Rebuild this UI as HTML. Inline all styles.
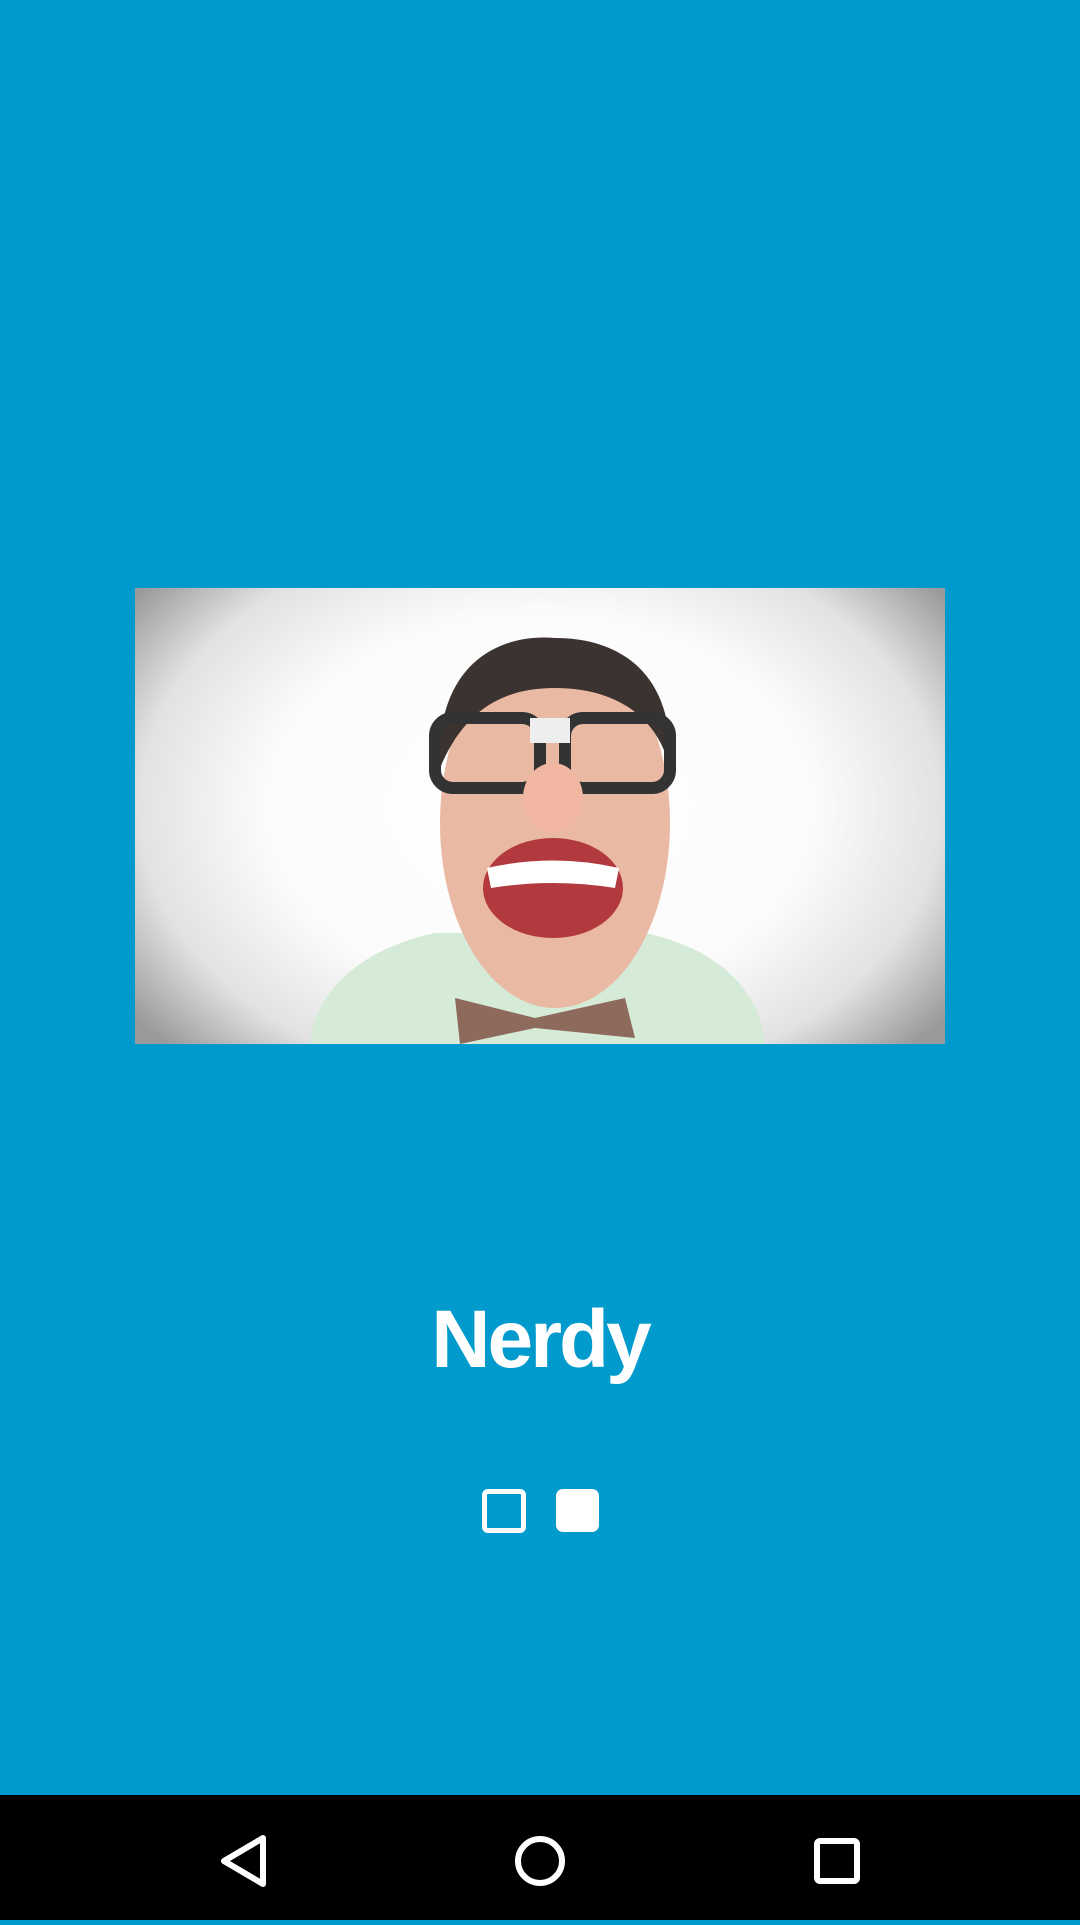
<!DOCTYPE html>
<html><head><meta charset="utf-8"><style>
html,body{margin:0;padding:0;width:1080px;height:1920px;overflow:hidden;background:#009ACD;font-family:"Liberation Sans",sans-serif}
.img{position:absolute;left:135px;top:588px;width:810px;height:456px;overflow:hidden;
background:radial-gradient(ellipse 62% 78% at 50% 48%,#ffffff 0%,#fbfbfb 55%,#e2e2e4 80%,#9a9a9c 100%)}
.title{position:absolute;left:0;width:1080px;top:1290px;text-align:center;color:#fff;font-weight:bold;font-size:82px;letter-spacing:-3px;line-height:100px}
.d1{position:absolute;left:482px;top:1489px;width:34px;height:34px;border:5px solid #fff;border-radius:6px}
.d2{position:absolute;left:556px;top:1489px;width:43px;height:43px;background:#fff;border-radius:7px}
.nav{position:absolute;left:0;top:1795px;width:1080px;height:125px;background:#000}
</style></head><body>
<div class="img">
<svg width="810" height="456" viewBox="0 0 810 456">
<path d="M175 456 C180 400 230 360 300 345 L510 345 C580 360 625 400 630 456Z" fill="#d6ead8"/>
<path d="M320 410 L400 430 L490 410 L500 450 L400 440 L325 456Z" fill="#8d6a5c"/>
<ellipse cx="420" cy="235" rx="115" ry="185" fill="#e9b9a4"/>
<path d="M305 180 C300 80 360 45 420 50 C490 50 540 90 535 180 C520 120 470 100 420 100 C370 100 330 120 305 180Z" fill="#3a3330"/>
<rect x="300" y="130" width="105" height="70" rx="18" fill="none" stroke="#333" stroke-width="12"/>
<rect x="430" y="130" width="105" height="70" rx="18" fill="none" stroke="#333" stroke-width="12"/>
<rect x="395" y="130" width="40" height="25" fill="#eee"/>
<ellipse cx="418" cy="300" rx="70" ry="50" fill="#b23a3e"/>
<path d="M352 280 Q418 265 484 280 L480 300 Q418 290 356 300Z" fill="#fff"/>
<ellipse cx="418" cy="210" rx="30" ry="35" fill="#f2b7a2"/>
</svg>
</div>
<div class="title">Nerdy</div>
<div class="d1"></div><div class="d2"></div>
<div class="nav">
<svg width="1080" height="125" viewBox="0 0 1080 125">
<path d="M263 43 L263 89 L224 66Z" fill="none" stroke="#fff" stroke-width="6" stroke-linejoin="round"/>
<circle cx="540" cy="66" r="22" fill="none" stroke="#fff" stroke-width="6"/>
<rect x="817" y="46" width="40" height="40" rx="3" fill="none" stroke="#fff" stroke-width="6"/>
</svg>
</div>
</body></html>
